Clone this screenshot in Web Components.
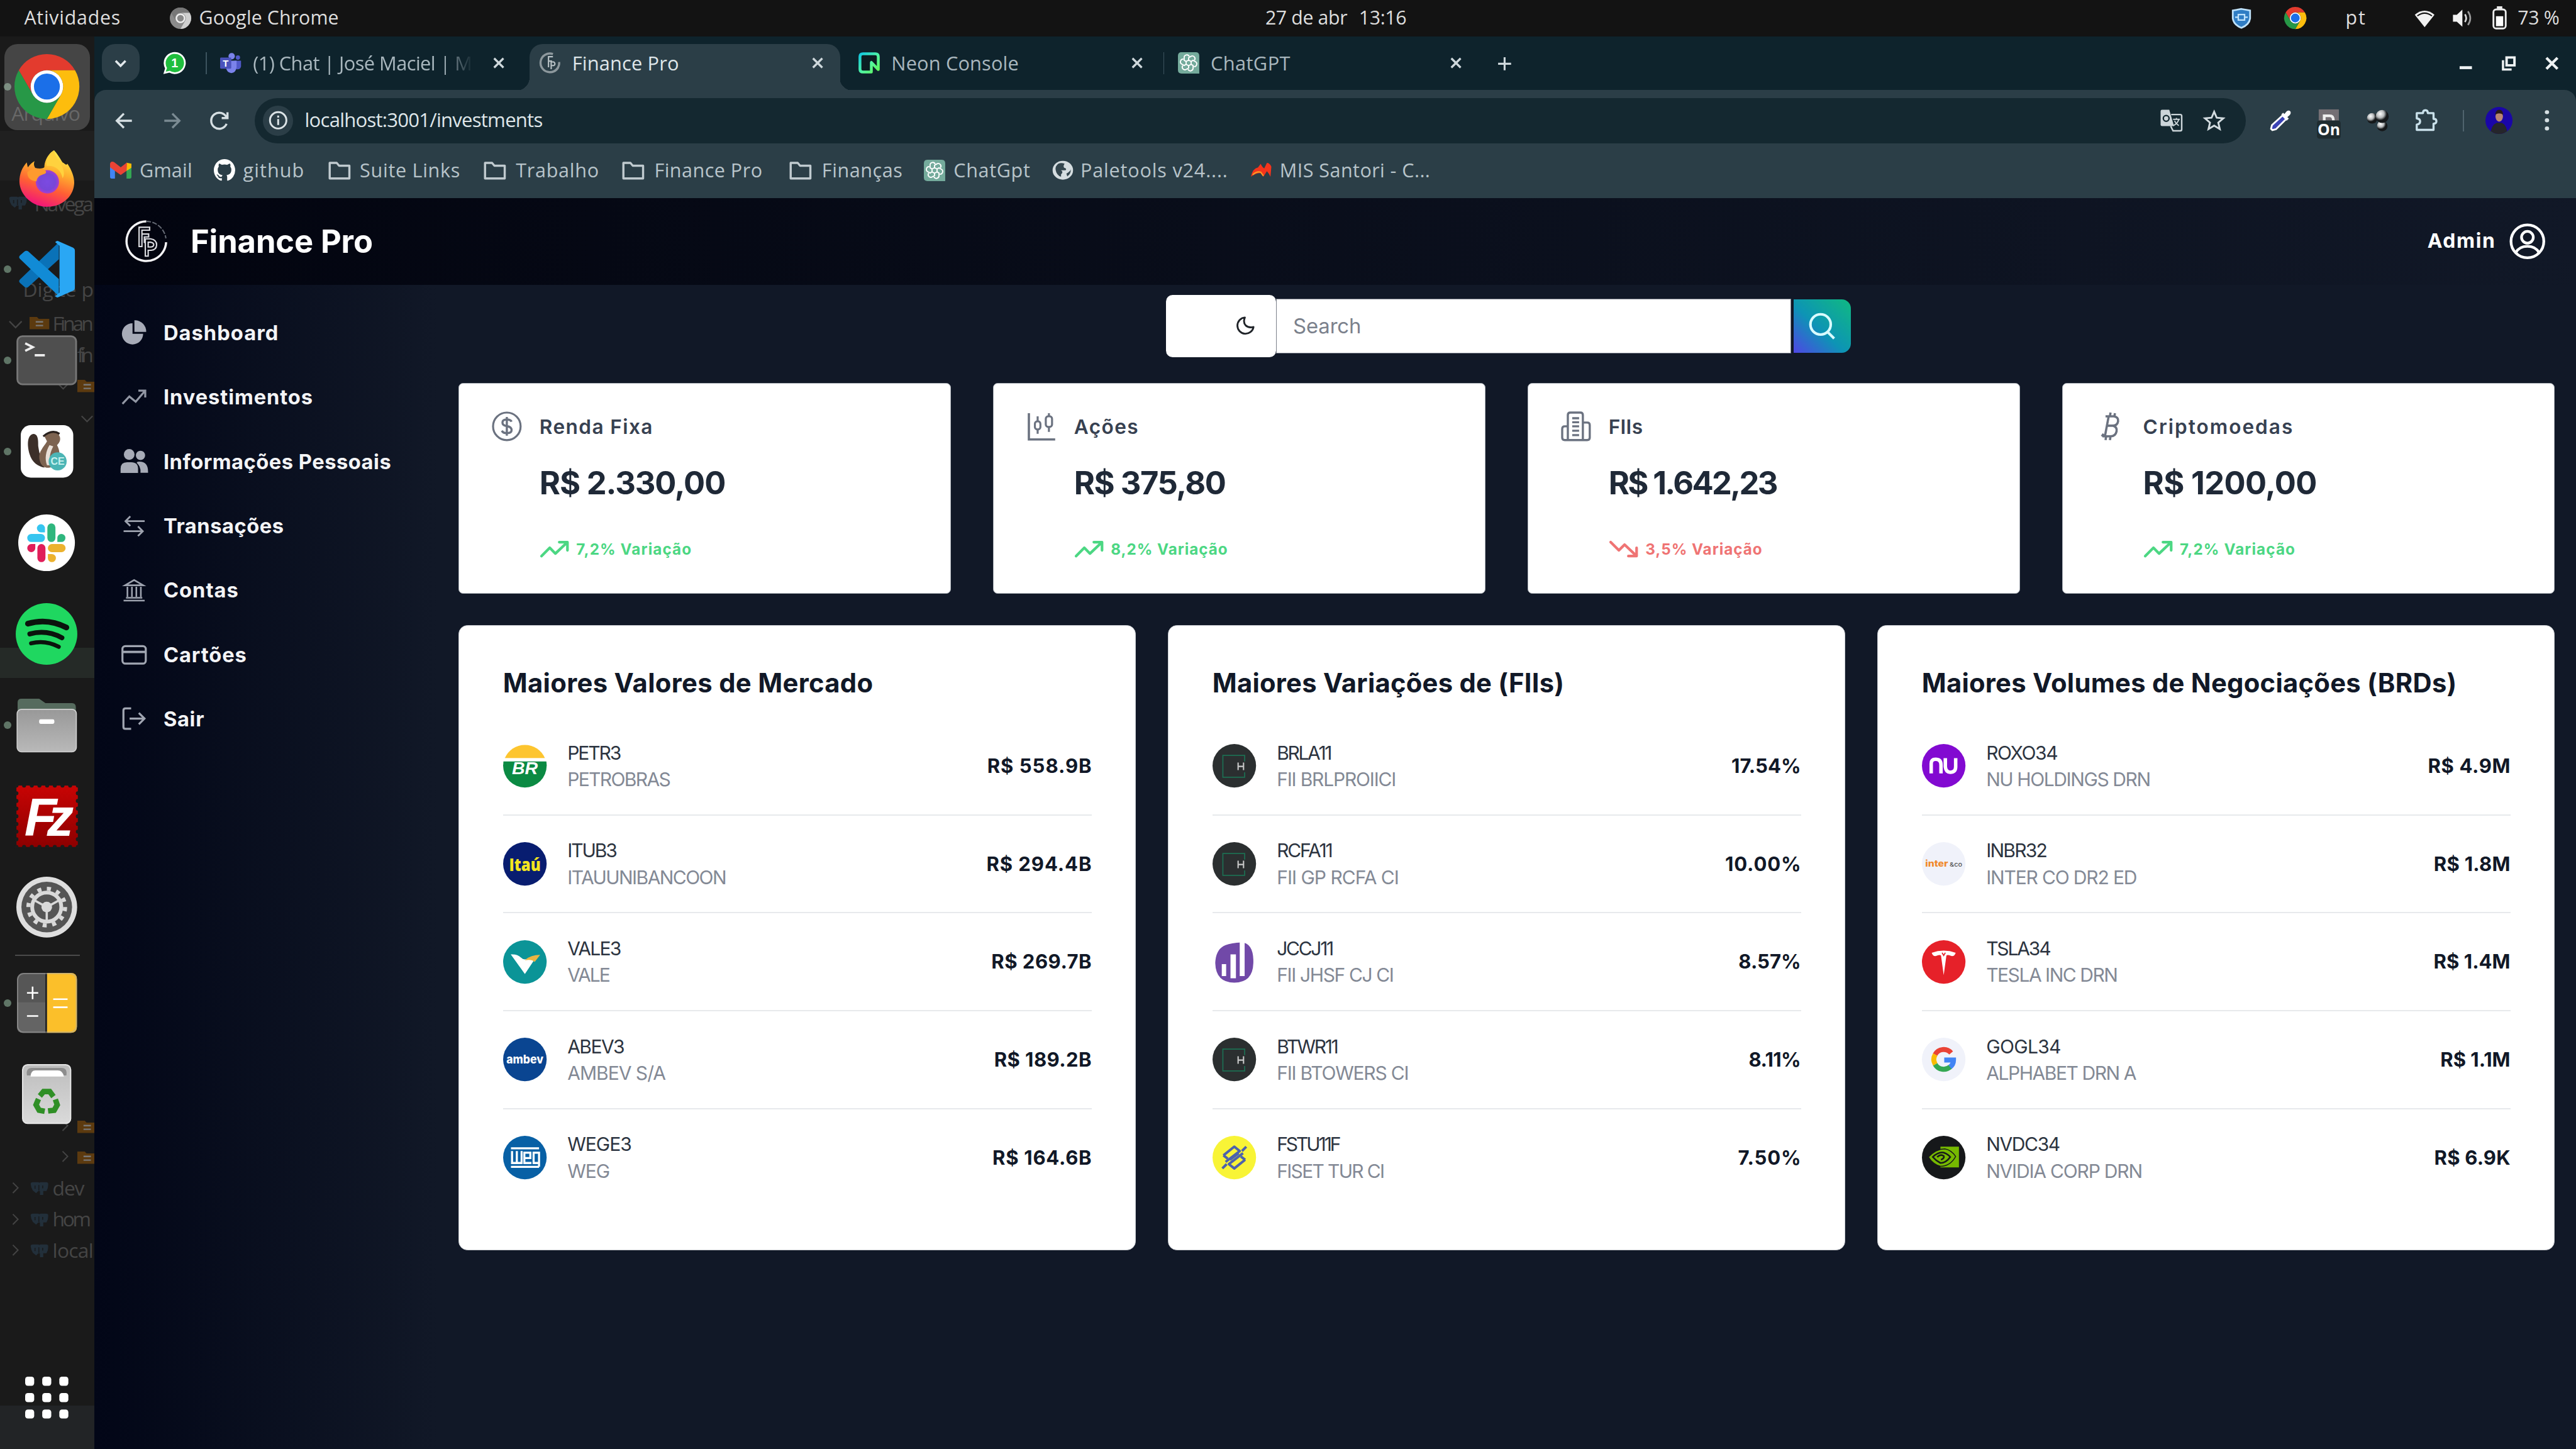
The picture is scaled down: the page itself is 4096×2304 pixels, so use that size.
<!DOCTYPE html>
<html lang="pt-BR">
<head>
<meta charset="utf-8">
<title>Finance Pro</title>
<style>
html{font-size:calc(100vw / 1568);background:#111827}
body{margin:0;width:100vw;height:100vh;overflow:hidden;font-family:"Open Sans","Noto Sans",sans-serif}
</style>
</head>
<body>
<desktop-shell></desktop-shell>
<script>
const UI = '"Open Sans","Noto Sans",sans-serif';
const APP = 'Inter,"Liberation Sans",sans-serif';

const chromeParts = `<path fill="#e33b2e" d="M24 12H44.8A24 24 0 0 0 3.2 12L13.6 30A12 12 0 0 1 24 12Z"/><path fill="#fdbd0d" d="M34.4 30L24 48A24 24 0 0 0 44.8 12H24A12 12 0 0 1 34.4 30Z"/><path fill="#279847" d="M13.6 30L3.2 12A24 24 0 0 0 24 48L34.4 30A12 12 0 0 1 13.6 30Z"/><circle cx="24" cy="24" r="12" fill="#fff"/><circle cx="24" cy="24" r="9.6" fill="#1b6fe8"/>`;
const gptKnot = `<g fill="none" stroke="#fff" stroke-width="1.3" stroke-linejoin="round">${[0,60,120,180,240,300].map(a=>`<path transform="rotate(${a} 12 12)" d="M12 9.2V6.2L14.6 4.7A3 3 0 0 1 18.6 9"/>`).join('')}<path d="M12 8.8L14.8 10.4V13.6L12 15.2L9.2 13.6V10.4Z"/></g>`;
const cart = `<circle cx="20" cy="20" r="20" fill="#2b2f30"/><path d="M29.5 16V10.5H9.5V30.5H29.5V26" fill="none" stroke="#1d6f52" stroke-width="1"/><path d="M23.5 17V24M28.5 17V24M23.5 20.6H28.5" fill="none" stroke="#c9c9c9" stroke-width="1.2"/>`;
const up = c => `<path d="M1.5 12.5L8 6L12.5 10.5L21.5 2M15.5 1.5H22V8" fill="none" stroke="${c}" stroke-width="2.1" stroke-linecap="round" stroke-linejoin="round"/>`;

/* name -> [viewBox, markup] */
const ICONS = {
  chrome:['0 0 48 48', chromeParts],
  chromeGray:['0 0 48 48', `<circle cx="24" cy="24" r="24" fill="#8b8b8b"/><path d="M24 12H44.8A24 24 0 0 0 3.2 12L13.6 30A12 12 0 0 1 24 12Z" fill="#777"/><path d="M34.4 30L24 48A24 24 0 0 0 44.8 12H24A12 12 0 0 1 34.4 30Z" fill="#cfcfcf"/><circle cx="24" cy="24" r="11" fill="#eee"/><circle cx="24" cy="24" r="7.5" fill="#888"/>`],
  firefox:['0 0 48 48', `<defs><linearGradient id="f1" x1=".7" y1="0" x2=".35" y2="1"><stop offset="0" stop-color="#fff34f"/><stop offset=".35" stop-color="#ffb02e"/><stop offset=".65" stop-color="#ff5f34"/><stop offset="1" stop-color="#f1117d"/></linearGradient><radialGradient id="f2"><stop offset="0" stop-color="#7b4ae2"/><stop offset=".7" stop-color="#7747d8"/><stop offset="1" stop-color="#a93dce"/></radialGradient></defs><path fill="url(#f1)" d="M30 1C33 4 35 8 37 11C39 12 40 14 41 12C45 18 47 24 46.500 29C45.500 40 36 47.500 24.500 47.500C12 47.500 2 38 1.500 27C1.500 20 4 15 7.500 11C8 13 8 14 8.500 15C10 13 12 11 14 10C13 12 13.500 14 14.500 15.500C17 16 20 16.500 22 15C22 9 26 3 30 1Z"/><circle cx="24.500" cy="27" r="9.600" fill="url(#f2)"/><path fill="#ff9a2e" d="M8 19C12 15 18 16 22 17C23.500 18 24 19.500 22.500 20.300C19 21.500 16.500 22 15.500 26.500C9 26 8 22 8 19Z"/><path fill="#ffd23e" d="M24 14C30 13 36 17 37 24C39 21 38 17 36.500 14C34 10 31 6 30 1C24.500 5 23 9 24 14Z"/>`],
  vscode:['0 0 48 48', `<path fill="#0a72b8" d="M34 2V16L9 38.500Q7.500 39.500 6 38.300L2.500 35.200Q1 33.700 2.500 32.300Z"/><path fill="#118bd6" d="M34 46V32L9 9.500Q7.500 8.500 6 9.700L2.500 12.800Q1 14.300 2.500 15.700Z"/><path fill="#2aa7f4" d="M33 1L45.500 6.500Q47 7.300 47 9V39Q47 40.700 45.500 41.500L33 47Q32 47 31 46L34.500 43V5L31 2Q32 1 33 1Z"/>`],
  terminal:['0 0 48 40', `<rect x=".8" y=".8" width="46.400" height="38.400" rx="4" fill="#4f4f4f" stroke="#777" stroke-width="1.400"/><path d="M7 6.500L13 9.500L7 12.500M14.500 16H22.500" fill="none" stroke="#eee" stroke-width="1.800"/>`],
  dbeaver:['0 0 44 44', `<rect x="1" y="1" width="42" height="42" rx="8" fill="#fff"/><path fill="#3c2f29" d="M11 8C6 9 6 17 8 24C10 31 15 34 20 35C17 29 16 24 15 18C15 13 15 8 11 8Z"/><path fill="#7d6350" d="M20 10C22 7 28 6 31 8C34 12 32 15 30 17C34 24 32 34 24 35C18 36 15 30 16 24C18 19 21 16 22 14Z"/><path fill="#e9e0d8" d="M24 17C21 22 20 28 22 33L25 33C23 27 25 22 27 18Z"/><path d="M19 10Q26 4 32 8" fill="none" stroke="#2a211d" stroke-width="1.600"/><circle cx="30.500" cy="30" r="7.200" fill="#4bb5b5"/><text x="30.500" y="32.800" font-family="Liberation Sans" font-size="8" font-weight="700" text-anchor="middle" fill="#c9f1ef">CE</text>`],
  slack:['0 0 44 44', `<circle cx="22" cy="22" r="22" fill="#fff"/><g transform="translate(7 7) scale(1.25)"><g fill="#36c5f0"><rect y="6.500" width="11" height="5" rx="2.500"/><path d="M11 5.500H8.500A2.500 2.500 0 1 1 11 3Z"/></g><g fill="#2eb67d"><rect x="12.500" y="0" width="5" height="11.500" rx="2.500"/><path d="M18.700 11.500V9A2.500 2.500 0 1 1 21.200 11.500Z"/></g><g fill="#ecb22e"><rect x="12.800" y="12.800" width="11" height="5" rx="2.500"/><path d="M12.800 19H15.300A2.500 2.500 0 1 1 12.800 21.500Z"/></g><g fill="#e01e5a"><rect x="6.300" y="12.800" width="5" height="11.200" rx="2.500"/><path d="M5 12.800V15.300A2.500 2.500 0 1 1 2.500 12.800Z"/></g></g>`],
  spotify:['0 0 48 48', `<circle cx="24" cy="24" r="24" fill="#1fd760"/><g fill="none" stroke="#0b130d" stroke-linecap="round"><path d="M9.500 16Q25 11.500 39.500 19" stroke-width="4.400"/><path d="M11 24Q24 20.500 36 27" stroke-width="3.800"/><path d="M12 31.300Q23 28.500 33.500 34" stroke-width="3.200"/></g>`],
  files:['0 0 48 44', `<defs><linearGradient id="g" x1="0" y1="0" x2="0" y2="1"><stop offset="0" stop-color="#989898"/><stop offset="1" stop-color="#b9b9b9"/></linearGradient></defs><path d="M1 12V4Q1 1 4 1H18L23 4.500H44Q47 4.500 47 8V14H1Z" fill="#566b5e"/><rect x=".6" y="9.500" width="46.800" height="34" rx="3.500" fill="url(#g)" stroke="#d0d0d0" stroke-width=".8"/><rect x="18" y="17.500" width="12" height="3.600" rx="1.200" fill="#fff"/>`],
  filezilla:['0 0 48 48', `<defs><linearGradient id="z" x1="0" y1="0" x2="0" y2="1"><stop offset="0" stop-color="#c80404"/><stop offset="1" stop-color="#8d0000"/></linearGradient></defs><rect x="1" y="1" width="46" height="46" fill="url(#z)"/><rect x="1" y="1" width="46" height="46" fill="none" stroke="#1b1b1b" stroke-width="3" stroke-linecap="round" stroke-dasharray="0 5.750"/><text x="7" y="38.500" font-family="Liberation Sans" font-size="40" font-weight="700" font-style="italic" letter-spacing="-7.500" fill="#fff">Fz</text>`],
  settings:['0 0 48 48', `<circle cx="24" cy="24" r="24" fill="#dedede"/><circle cx="24" cy="24" r="20" fill="#555"/><circle cx="24" cy="24" r="14.500" fill="none" stroke="#d9d9d9" stroke-width="3.200" stroke-dasharray="3.200 4.392"/><circle cx="24" cy="24" r="11.500" fill="none" stroke="#d9d9d9" stroke-width="3"/><circle cx="24" cy="24" r="4.200" fill="#d9d9d9"/><path d="M24 24L24 35M24 24L14 18.500M24 24L34 18.500" stroke="#d9d9d9" stroke-width="1.800"/>`],
  calc:['0 0 48 48', `<rect width="48" height="48" rx="5" fill="#565656"/><path d="M24 0H43Q48 0 48 5V43Q48 48 43 48H24Z" fill="#fbbf2a"/><path d="M0 23.500H23V48H5Q0 48 0 43Z" fill="#646464"/><path d="M23.300 0V48" stroke="#222" stroke-width="1.300"/><path d="M8 16H17M12.500 11V21M8 34.500H17M29 21H40.500M29 27.500H40.500" stroke="#fff" stroke-width="1.300"/><rect x=".5" y=".5" width="47" height="47" rx="5" fill="none" stroke="#aaa" stroke-opacity=".5"/>`],
  trash:['0 0 40 48', `<defs><linearGradient id="t" x1="0" y1="0" x2="0" y2="1"><stop offset="0" stop-color="#bdbdbd"/><stop offset="1" stop-color="#dadada"/></linearGradient></defs><rect x=".5" y=".5" width="39" height="47" rx="4" fill="url(#t)" stroke="#e6e6e6"/><path d="M4 9Q3 3 8 3H32Q37 3 36 9Z" fill="#8d8d8d"/><path d="M7 10Q7 5 11 5H29Q33 5 34 10Z" fill="#fff"/><g fill="none" stroke="#2f8f26" stroke-width="4.400"><path d="M14.500 25.500L17.500 22H22.500L25.500 26"/><path transform="rotate(120 20 30.500)" d="M14.500 25.500L17.500 22H22.500L25.500 26"/><path transform="rotate(240 20 30.500)" d="M14.500 25.500L17.500 22H22.500L25.500 26"/></g>`],
  apps:['0 0 26 26', [0,9.8,19.6].map(y=>[0,10.2,20.4].map(x=>`<rect x="${x}" y="${y}" width="5.400" height="5.400" rx="1.600" fill="#fff"/>`).join('')).join('')],
  shield:['0 0 24 26', `<path d="M12 1L23 3V13Q22 21 12 25Q2 21 1 13V3Z" fill="#2f7dc4" stroke="#bfe2fb" stroke-width="2.200"/><path d="M8 8H16V15H8ZM8 11.500H4M16 11.500H20" fill="none" stroke="#bfe2fb" stroke-width="1.800"/>`],
  wifi:['0 0 24 20', `<path d="M12 20L.5 5.500Q12-4 23.500 5.500Z" fill="#f2f2f2"/><path d="M3.500 6.800Q12 .3 20.500 6.800" fill="none" stroke="#131313" stroke-width="1.600"/>`],
  volume:['0 0 24 22', `<path d="M1 7H5.500L12 1V21L5.500 15H1Z" fill="#f2f2f2"/><path d="M15 6.500Q18 11 15 15.500" fill="none" stroke="#ddd" stroke-width="2"/><path d="M18.500 3Q24 11 18.500 19" fill="none" stroke="#999" stroke-width="2"/>`],
  battery:['0 0 16 26', `<rect x="1.200" y="3.500" width="13.600" height="21" rx="3" fill="none" stroke="#ececec" stroke-width="2"/><rect x="5" y="0" width="6" height="3.500" fill="#ececec"/><rect x="4" y="11" width="8" height="11" fill="#fff"/>`],
  chevron:['0 0 12 12', `<path d="M2 4L6 8L10 4" fill="none" stroke="#e3e9ec" stroke-width="1.800"/>`],
  whatsapp:['0 0 24 24', `<path d="M.5 23.500L2.300 17.500A11.500 11.500 0 1 1 6.800 22Z" fill="#fff"/><path d="M3 21L4.300 17A9.600 9.600 0 1 1 7.200 20Z" fill="#1fbe3d"/><text x="12.300" y="16.500" font-family="Liberation Sans" font-weight="700" font-size="13" text-anchor="middle" fill="#fff">1</text>`],
  teams:['0 0 24 24', `<circle cx="13" cy="4.500" r="3.600" fill="#7b83eb"/><circle cx="20" cy="6" r="2.400" fill="#5059c9"/><path d="M16 9.500H23.500V16Q22.500 20 18 19Z" fill="#5059c9"/><path d="M6.500 9.500H18.500V17Q17.500 23.500 12.500 23.500Q7.500 23 6.500 17Z" fill="#7b83eb"/><rect x="0" y="6" width="12.500" height="12.500" rx="1" fill="#4b53bc"/><text x="6.200" y="16" font-family="Liberation Sans" font-weight="700" font-size="10.500" text-anchor="middle" fill="#fff">T</text>`],
  fpfav:['0 0 24 24', `<path d="M15 2A10.500 10.500 0 1 0 22 11M21 17A10 10 0 0 1 9 22" fill="none" stroke="#8d989d" stroke-width="2.400"/><path d="M10 17V5H15M10 10H14M13 19V11H16Q18.500 13 16 15H13" fill="none" stroke="#b9c2c6" stroke-width="1.500"/>`],
  neon:['0 0 24 24', `<defs><linearGradient id="n" x1="0" y1="0" x2="1" y2="1"><stop offset="0" stop-color="#12c8e0"/><stop offset=".55" stop-color="#52f5a1"/><stop offset="1" stop-color="#63f655"/></linearGradient></defs><path d="M14.500 22.300H5Q1.700 22.300 1.700 19V5Q1.700 1.700 5 1.700H19Q22.300 1.700 22.300 5V19.500L14.500 11.500Z" fill="#0c1d22" stroke="url(#n)" stroke-width="3.200" stroke-linejoin="round"/>`],
  gpt:['0 0 24 24', `<path d="M4 0H20Q24 0 24 4V24H4Q0 24 0 20V4Q0 0 4 0Z" fill="#75ab9c"/>${gptKnot}`],
  x:['0 0 12 12', `<path d="M2 2L10 10M10 2L2 10" stroke="#cfd8dc" stroke-width="1.800"/>`],
  plus:['0 0 12 12', `<path d="M6 1V11M1 6H11" stroke="#cfd8dc" stroke-width="1.500"/>`],
  min:['0 0 12 12', `<path d="M1 9.500H11" stroke="#eef2f3" stroke-width="2.400"/>`],
  restore:['0 0 12 12', `<path d="M4.400 1.200H10.800V7.600H4.400Z" fill="none" stroke="#eef2f3" stroke-width="2"/><path d="M1.500 3.500V11H8.500" fill="none" stroke="#eef2f3" stroke-width="1.800"/>`],
  close:['0 0 12 12', `<path d="M1.500 1.500L10.500 10.500M10.500 1.500L1.500 10.500" stroke="#eef2f3" stroke-width="2.200"/>`],
  back:['0 0 24 24', `<path d="M21 12H4M12 4L4 12L12 20" fill="none" stroke="#d6dfe3" stroke-width="2.400"/>`],
  fwd:['0 0 24 24', `<path d="M3 12H20M12 4L20 12L12 20" fill="none" stroke="#7b8b93" stroke-width="2.400"/>`],
  reload:['0 0 24 24', `<path d="M20 15.500A9 9 0 1 1 20 8.500M21 2.500V9H14.500" fill="none" stroke="#d6dfe3" stroke-width="2.400"/>`],
  info:['0 0 24 24', `<circle cx="12" cy="12" r="9.600" fill="none" stroke="#dbe3e6" stroke-width="2.200"/><path d="M12 10.500V17.500M12 6.500V8.800" stroke="#dbe3e6" stroke-width="2.200"/>`],
  translate:['0 0 24 24', `<path d="M1 2.500Q1 1 2.500 1H10L15 18H2.500Q1 18 1 16.500Z" fill="#ccd5d9"/><path d="M12 6H21.500Q23 6 23 7.500V21.500Q23 23 21.500 23H14L11.500 18" fill="none" stroke="#ccd5d9" stroke-width="1.600"/><circle cx="6.800" cy="10" r="3" fill="none" stroke="#142830" stroke-width="1.500"/><path d="M14 11H21M17.500 9.500V11M20 11Q19 15 14.500 17.500M15.500 12.500Q17 15.500 20 17.500" stroke="#ccd5d9" stroke-width="1.200" fill="none"/>`],
  star:['0 0 24 24', `<path d="M12 2.500L14.800 9L21.900 9.600L16.500 14.300L18.100 21.200L12 17.500L5.900 21.200L7.500 14.300L2.100 9.600L9.200 9Z" fill="none" stroke="#d3dce0" stroke-width="2"/>`],
  pipette:['0 0 24 24', `<path d="M14.500 6L18.500 10L7 21.500L3 22.500L1.500 21L2.500 17Z" fill="#3b43b5" stroke="#fff" stroke-width="2"/><path d="M13 5L15 3L16.500 4.500L19 1.500Q22-.5 23.500 2Q24 4.500 22 6L19.800 8L21.500 9.500L19 12Z" fill="#fff"/>`],
  onext:['0 0 26 34', `<rect x="2" y="2" width="22" height="20" fill="#746f74"/><path d="M8 14V9H14Q18 9 18 14" fill="none" stroke="#eee" stroke-width="3"/><rect x="0" y="14" width="26" height="20" rx="3" fill="#1f2c30"/><text x="13" y="30.500" font-family="Open Sans" font-weight="700" font-size="17" text-anchor="middle" fill="#fff">On</text>`],
  balls:['0 0 24 24', `<defs><radialGradient id="b" cx=".35" cy=".3"><stop offset="0" stop-color="#fff"/><stop offset=".6" stop-color="#b5b8ba"/><stop offset="1" stop-color="#15181a"/></radialGradient></defs><circle cx="17" cy="18" r="5.500" fill="url(#b)"/><circle cx="6.500" cy="10" r="5.500" fill="url(#b)"/><circle cx="17" cy="8" r="6.800" fill="url(#b)"/>`],
  puzzle:['0 0 24 24', `<path d="M2.500 4.500H9Q9 1.500 11.500 1.500Q14 1.500 14 4.500H20V10.500Q23 10.500 23 13Q23 15.500 20 15.500V22H2.500V16.500Q6 16 6 13.200Q6 10.500 2.500 10Z" fill="none" stroke="#c9e0ea" stroke-width="2.200" stroke-linejoin="round"/>`],
  avatar:['0 0 24 24', `<defs><clipPath id="a"><circle cx="12" cy="12" r="12"/></clipPath></defs><g clip-path="url(#a)"><rect width="24" height="24" fill="#1a06a8"/><path d="M4.500 24Q5 16 10 14H14.500Q19 16 19.500 24Z" fill="#25252b"/><ellipse cx="12.200" cy="8.500" rx="3.300" ry="4.600" fill="#b98573"/><path d="M8.700 7Q9 2.500 12.200 2.500Q15.500 2.500 15.700 7Q12 4.500 8.700 7Z" fill="#2a1a18"/></g>`],
  dots:['0 0 6 24', `<g fill="#d6dfe3"><circle cx="3" cy="3.500" r="2.100"/><circle cx="3" cy="12" r="2.100"/><circle cx="3" cy="20.500" r="2.100"/></g>`],
  gmail:['0 0 24 20', `<path d="M0 3V18Q0 19.500 1.500 19.500H5.500V7Z" fill="#4285f4"/><path d="M24 3V18Q24 19.500 22.500 19.500H18.500V7Z" fill="#34a853"/><path d="M18.500 2L24 3V7.500L18.500 11Z" fill="#fbbc04"/><path d="M0 3Q1-.5 5 1.500L12 7L19 1.500L18.500 11L12 15.500L5.500 11L0 7Z" fill="#ea4335"/>`],
  github:['0 0 16 16', `<path fill="#fff" fill-rule="evenodd" d="M8 0C3.580 0 0 3.580 0 8c0 3.540 2.290 6.530 5.470 7.590.4.070.550-.170.550-.380 0-.190-.010-.820-.010-1.490-2.010.370-2.530-.490-2.690-.940-.090-.230-.480-.940-.820-1.130-.280-.150-.680-.520-.010-.530.630-.010 1.080.580 1.230.820.720 1.210 1.870.870 2.330.660.070-.520.280-.870.510-1.070-1.780-.2-3.640-.890-3.640-3.950 0-.870.310-1.590.820-2.150-.080-.2-.360-1.020.080-2.120 0 0 .670-.210 2.200.820.640-.180 1.320-.270 2-.270s1.360.090 2 .270c1.530-1.040 2.200-.820 2.200-.820.440 1.100.160 1.920.080 2.120.510.560.820 1.270.820 2.150 0 3.070-1.870 3.750-3.650 3.950.290.250.540.730.540 1.480 0 1.070-.010 1.930-.010 2.200 0 .210.150.460.550.380A8.010 8.010 0 0 0 16 8c0-4.420-3.580-8-8-8z"/>`],
  folder:['0 0 24 20', `<path d="M1.500 2H9L11.500 5H22.500V18.500H1.500Z" fill="none" stroke="#c0cacf" stroke-width="2.300" stroke-linejoin="round"/>`],
  globe:['0 0 24 24', `<circle cx="12" cy="12" r="11.500" fill="#d5dde0"/><path d="M4 12Q3 7 7 4Q10 2.500 14 4Q12 7 13.500 9Q17 10 15 12H10Q13 14 10 17V20Q5 18 4 12ZM16 16Q20 14 21 11Q21 17 17 19.500Z" fill="#34464e"/>`],
  mis:['0 0 24 16', `<path d="M0 15Q2 6 8 5L11 1Q13 5 15 6L18 0Q21 0 23 4L22 15Q20 11 18 9L14 15Q12 12 11 11Q5 11 0 15Z" fill="#f4341c"/><path d="M2 13Q6 9 11 10L14 14" stroke="#fb9a24" stroke-width="1.400" fill="none"/>`],
  fplogo:['0 0 44 44', `<path d="M22 1.300A20.700 20.700 0 0 0 9 38A20.700 20.700 0 0 0 42.700 23" fill="none" stroke="#f4f4f6" stroke-width="2.300"/><path d="M22 1.300A20.700 20.700 0 0 1 42.500 19" fill="none" stroke="#666b75" stroke-width="1.300" stroke-dasharray="5 1.500"/><path d="M14.500 27.500V7.500H25.500V10.500H17.500V27.500ZM17.500 14.500H24.500V17.500H20V24M21 37.500V19.500H26.500Q33 20.500 32.800 26Q32.500 31 27 31.500H24V37.500ZM24 28V23H26.500Q29.800 23.500 29.800 25.800Q29.500 28 26.500 28Z" fill="none" stroke="#dcdde1" stroke-width="1.400"/>`],
  user:['0 0 24 24', `<g fill="none" stroke="#fff" stroke-width="1.800"><circle cx="12" cy="12" r="10.900"/><circle cx="12" cy="9.300" r="3.900"/><path d="M4.300 19.500Q6.500 15.300 12 15.300Q17.500 15.300 19.700 19.500"/></g>`],
  pie:['0 0 24 24', `<path fill="#a7abb7" d="M10.500 3.500V13.500H20.500A10 10 0 1 1 10.500 3.500Z"/><path fill="#a7abb7" d="M12.300 .8A10.500 10.500 0 0 1 23.400 11.700H12.300Z"/>`],
  trend:['0 0 24 24', `<path d="M1 18.500L7.500 11.500L13.500 16.500L22 6.500M16 6H22.500V12.500" fill="none" stroke="#9297a4" stroke-width="1.900"/>`],
  users:['0 0 24 22', `<g fill="#a7abb7"><circle cx="17.500" cy="6" r="4"/><path d="M15 11.500Q24 10.500 24 20V21H17.500Q18 15 14 12.500Z"/></g><g fill="#a7abb7" stroke="#070c1b" stroke-width=".8"><circle cx="7.800" cy="5.200" r="5"/><path d="M0 21.500V17.500Q0 11.500 6 11.500H9.500Q15.800 11.500 15.800 17.500V21.500Z"/></g>`],
  swap:['0 0 24 24', `<path d="M23 7H3M8 2L3 7L8 12M1 17.500H21M16 12.500L21 17.500L16 22.500" fill="none" stroke="#9da2ae" stroke-width="1.900"/>`],
  bank:['0 0 24 24', `<path d="M1 23H23M3.500 20H20.500M5 8.500V19M9.700 8.500V19M14.300 8.500V19M19 8.500V19M2.500 7H21.500L12 1.500Z" fill="none" stroke="#9da2ae" stroke-width="1.700"/>`],
  card:['0 0 24 20', `<rect x="1" y="2" width="22" height="16.500" rx="2.800" fill="none" stroke="#a0a5b1" stroke-width="1.900"/><path d="M1 7.500H23" stroke="#a0a5b1" stroke-width="2.200"/>`],
  exit:['0 0 24 24', `<path d="M9.500 2H4Q2 2 2 4V20Q2 22 4 22H9.500M8 12H22M17 6.500L22.500 12L17 17.500" fill="none" stroke="#a0a5b1" stroke-width="2"/>`],
  moon:['0 0 24 24', `<path d="M11.500 1.500A10.300 10.300 0 1 0 22.500 13.500Q16 15 12.500 11.500Q9 7.500 11.500 1.500Z" fill="none" stroke="#1f2328" stroke-width="2.300" stroke-linejoin="round"/>`],
  lens:['0 0 24 24', `<circle cx="10.500" cy="10.500" r="9" fill="none" stroke="#d9fbff" stroke-width="2.300"/><path d="M16.500 17L22.500 23" stroke="#d9fbff" stroke-width="2.300"/>`],
  dollar:['0 0 24 24', `<circle cx="12" cy="12" r="11" fill="none" stroke="#6b7280" stroke-width="1.600"/><path d="M15.800 8.300Q15 6.500 12 6.500Q8.500 6.500 8.500 9Q8.500 11.200 12 11.800Q15.800 12.500 15.800 15Q15.800 17.500 12 17.500Q9 17.500 8 15.500M12 4.500V19.500" fill="none" stroke="#6b7280" stroke-width="1.700"/>`],
  candles:['0 0 24 24', `<path d="M2 1.500V22.500H23" fill="none" stroke="#6b7280" stroke-width="1.800"/><path d="M9 4V8M9 14.500V18M18 1.500V4M18 12.500V16.500" stroke="#6b7280" stroke-width="1.600"/><rect x="6.800" y="8" width="4.400" height="6.500" rx="2" fill="none" stroke="#6b7280" stroke-width="1.600"/><rect x="15.500" y="4" width="5" height="8.500" rx="2" fill="none" stroke="#6b7280" stroke-width="1.600"/>`],
  building:['0 0 24 24', `<path d="M5.500 23V3Q5.500 1 7.500 1H15.500Q17.500 1 17.500 3V23M5.500 12H3Q1 12 1 14V21Q1 23 3 23H21Q23 23 23 21V11Q23 9 21 9H17.500M9 5.500H14.500M9 8.700H14.500M9 12H14.500M9 15.500H14.500M9 19H14.500" fill="none" stroke="#6b7280" stroke-width="1.700"/>`],
  bitcoin:['0 0 24 24', `<path d="M9 4H14.500Q18.500 4.500 18 8Q17.500 11.500 13.500 11.500H9.500M8.500 11.500H14Q17.500 12.500 16.800 16Q16 20 12 20H5.500M10.500 4L7.500 20M8 4H11M12 1L11.500 4M15.500 1.500L15 4.500M8.500 20L8 23M12 20L11.500 23M5 20L6.500 18" fill="none" stroke="#6b7280" stroke-width="1.800"/>`],
  upg:['0 0 24 14', up('#4cd783')],
  downr:['0 0 24 14', `<path d="M1.500 1.500L8 8L12.500 3.500L21.500 12M15.500 12.500H22V6" fill="none" stroke="#ef7474" stroke-width="2.100" stroke-linecap="round" stroke-linejoin="round"/>`],
  petro:['0 0 40 40', `<circle cx="20" cy="20" r="20" fill="#0b8a43"/><path d="M0 19A20 20 0 0 1 40 19Z" fill="#fff"/><path d="M1.500 13.200A20 20 0 0 1 38.500 13.200Z" fill="#fdc52f"/><rect x="0" y="13" width="40" height="3" fill="#fff"/><path d="M.4 16H39.600Q40 17 40 20H0Z" fill="#0b8a43"/><text x="20" y="27.500" font-family="Liberation Sans" font-size="16.500" font-weight="700" font-style="italic" text-anchor="middle" fill="#fff">BR</text>`],
  itau:['0 0 40 40', `<circle cx="20" cy="20" r="20" fill="#081d70"/><text x="20" y="26.500" font-family="Open Sans" font-size="16" font-weight="800" textLength="29" lengthAdjust="spacingAndGlyphs" text-anchor="middle" fill="#f3e51f">Itaú</text>`],
  vale:['0 0 40 40', `<circle cx="20" cy="20" r="20" fill="#0b9497"/><path d="M7 13Q13 12.500 16.500 16Q19 18.500 22 17L30 16L20 31Z" fill="#fff"/><path d="M20 18.500Q25 13.500 34 13.500L29 20Q26 17 20 18.500Z" fill="#eab543"/>`],
  ambev:['0 0 40 40', `<circle cx="20" cy="20" r="20" fill="#0a4591"/><text x="20" y="23.500" font-family="Inter" font-size="11" font-weight="800" textLength="34" lengthAdjust="spacingAndGlyphs" text-anchor="middle" fill="#fff">ambev</text>`],
  weg:['0 0 40 40', `<circle cx="20" cy="20" r="20" fill="#0860a5"/><path d="M7.200 11.500H33M7.200 28.500H33M8.200 14V25H17V14M12.600 14V25M26 25H19.500V15.500H25V20.500H19.500M33 28.500V15.500H28V25H33" fill="none" stroke="#fff" stroke-width="1.900"/>`],
  cart:['0 0 40 40', cart],
  jhsf:['0 0 40 40', `<path d="M2.500 21Q3 8 12 4.500Q17 2.500 27 2Q38 3 37.500 21Q37 39 20 39Q3 39 2.500 21Z" fill="#7149a8"/><path d="M8.500 22H12.500V33H8.500ZM16.500 13H21.500V35H16.500ZM25 0H29.500V33H25Z" fill="#fff"/>`],
  bb:['0 0 40 40', `<circle cx="20" cy="20" r="20" fill="#f8f436"/><g fill="none" stroke="#4c62ac" stroke-width="2.300" stroke-linejoin="round"><path d="M10 18L20 10L25 14L12 24M30 22L20 30L15 26L28 16"/><path d="M9 30L13 26M31 10L27 14M16 22L24 16M10 18L14 21M30 22L26 19"/></g>`],
  nu:['0 0 40 40', `<circle cx="20" cy="20" r="20" fill="#820ad1"/><path d="M8.500 27V18Q8.500 14 12.500 14Q17.500 14 17.500 19V27M21.500 13V21Q22 26 26 26Q31 26 31 21V13" fill="none" stroke="#fff" stroke-width="3.200"/>`],
  inter:['0 0 40 40', `<circle cx="20" cy="20" r="20" fill="#f0f2fa"/><text x="3" y="22.500" font-family="Inter" font-size="8.500" font-weight="800" textLength="21" lengthAdjust="spacingAndGlyphs" fill="#f08a2c">inter</text><text x="25.500" y="22.500" font-family="Inter" font-size="5.500" font-weight="500" textLength="11.500" lengthAdjust="spacingAndGlyphs" fill="#555">&amp;co</text>`],
  tesla:['0 0 40 40', `<circle cx="20" cy="20" r="20" fill="#e62129"/><path d="M9 11.500Q20 7.500 31 11.500Q30 15 27 14.500Q24 13 22.500 14L20 32L17.500 14Q16 13 13 14.500Q10 15 9 11.500Z" fill="#fff"/><path d="M18.500 11.500L20 14L21.500 11.500" fill="none" stroke="#e62129" stroke-width="1"/>`],
  google:['0 0 40 40', `<circle cx="20" cy="20" r="20" fill="#f0f2fa"/><g fill="none" stroke-width="4.600"><path d="M12.100 15.500A9 9 0 0 1 26.800 14" stroke="#ea4335"/><path d="M12.200 24.500A9 9 0 0 1 12.200 15.500" stroke="#fbbc05"/><path d="M26 26.700A9 9 0 0 1 12.200 24.500" stroke="#34a853"/><path d="M20.500 20.500H29Q29 24.500 25.800 27" stroke="#4285f4"/></g>`],
  nvidia:['0 0 40 40', `<circle cx="20" cy="20" r="20" fill="#16181a"/><path d="M17 10H34V29H17Z" fill="#76b900"/><path d="M6 19.500Q13 12 21 12Q27 13 31 19Q26 28 17 28Q10 26 6 19.500Z" fill="#76b900" stroke="#16181a" stroke-width=".8"/><path d="M10 19.500Q15 14.500 20 15.500Q24 17 26 19.500Q22 25 17 25Q13 23 10 19.500ZM14 19.500Q17 16.500 20 18.500Q21 20.500 17.500 22" fill="none" stroke="#16181a" stroke-width="1.500"/>`],
  gfolder:['0 0 16 11', `<path d="M0 1H6L7.500 2.500H16V11H0Z" fill="#5c3a0f"/><path d="M5 5H11M5 8H11" stroke="#777" stroke-width="1.200"/>`],
  gdb:['0 0 18 12', `<path d="M1 2Q1 .5 3 .5H8Q9 1.200 10 .5H15Q17.500 .5 17 3Q17 6 15.500 8.500H12.500V12H9.500V8.500H8L6 10.500L3 8Q1.200 5 1 2Z" fill="#222f3a"/><path d="M5 3.500V6.500M8.500 3V8M12 3.500V6" stroke="#1a1d20" stroke-width="1"/>`],
  gdown:['0 0 12 8', `<path d="M1 1.500L6 6.500L11 1.500" fill="none" stroke="#444" stroke-width="1.200"/>`],
  gright:['0 0 8 12', `<path d="M1.500 1L6.500 6L1.500 11" fill="none" stroke="#444" stroke-width="1.200"/>`],
};

const fitters = [];
const make = (tag, render) => customElements.define(tag, class extends HTMLElement {
  constructor(){ super(); this.attachShadow({mode:'open'}); }
  connectedCallback(){ if(!this.shadowRoot.firstChild) this.shadowRoot.innerHTML = render(this); }
});
const at = (el,n,d='') => el.getAttribute(n) ?? d;

/* Inline icon; s = width in rem, h = optional height */
make('ui-icon', el => {
  const [vb, body] = ICONS[at(el,'n')];
  const [,,w,h] = vb.split(' ').map(Number);
  const s = +at(el,'s',12), hh = +at(el,'h', s*h/w);
  return `<style>:host{display:block;flex:none;width:${s}rem;height:${hh}rem}svg{display:block;width:100%;height:100%;overflow:visible}</style><svg viewBox="${vb}" preserveAspectRatio="none" aria-hidden="true">${body}</svg>`;
});

/* One-line label tracked out or in to a set measure (w, in rem) */
customElements.define('fit-text', class extends HTMLElement {
  constructor(){
    super();
    this.attachShadow({mode:'open'}).innerHTML = `<style>:host{display:block;flex:none;white-space:pre;line-height:1.25}span{display:inline-block}</style><span><slot></slot></span>`;
  }
  connectedCallback(){ fitters.push(this); }
  fit(rem){
    const w = parseFloat(this.getAttribute('w')); if(!w) return;
    const s = this.shadowRoot.querySelector('span');
    const n = this.textContent.length;
    const ls = (w*rem - s.getBoundingClientRect().width)/(n-1);
    this.style.width = w+'rem';
    s.style.letterSpacing = ls.toFixed(3)+'px';
  }
});

make('top-bar', () => `<style>
:host{display:flex;align-items:center;height:22.300rem;background:#131313;color:#dedede;font-size:11.600rem;font-weight:500}
.l,.r{display:flex;align-items:center}.l{padding-left:14.700rem;width:755.500rem}.c{display:flex;gap:7rem}.r{flex:1;justify-content:flex-end;padding-right:10rem}
fit-text{margin-bottom:.600rem}
</style>
<div class="l"><fit-text w="58.500">Atividades</fit-text><ui-icon n="chromeGray" s="13" style="margin:0 5rem 0 30rem"></ui-icon><fit-text w="85">Google Chrome</fit-text></div>
<div class="c"><fit-text w="50">27 de abr</fit-text><fit-text w="29">13:16</fit-text></div>
<div class="r"><ui-icon n="shield" s="11.500"></ui-icon><ui-icon n="chrome" s="13.500" style="margin-left:20rem"></ui-icon><fit-text w="12" style="margin-left:24rem">pt</fit-text><ui-icon n="wifi" s="12.500" style="margin-left:30rem"></ui-icon><ui-icon n="volume" s="12.500" style="margin-left:10.500rem"></ui-icon><ui-icon n="battery" s="8.800" style="margin-left:12rem"></ui-icon><fit-text w="25.500" style="margin-left:6.500rem">73 %</fit-text></div>`);

make('dock-item', el => `<style>
:host{display:grid;grid-template-columns:9rem 39rem 9rem;height:55.500rem;flex:none;align-items:center;justify-items:center;position:relative}
i{width:4.600rem;height:4.600rem;border-radius:50%;background:#5f7566;${el.hasAttribute('run')?'':'visibility:hidden'}}
.a{position:absolute;left:2.700rem;top:1.700rem;width:52rem;height:52.300rem;border-radius:8rem;background:#fff;opacity:.19}
ui-icon{position:relative}
</style>${el.hasAttribute('active')?'<div class="a"></div>':''}<i></i><ui-icon n="${at(el,'n')}" s="${at(el,'s')}" h="${at(el,'h')}"></ui-icon>`);

make('side-dock', () => `<style>
:host{display:flex;flex-direction:column;position:relative;width:57.500rem;background:#1a1a1a;padding-top:2.800rem;box-sizing:border-box;overflow:hidden}
.ghost{position:absolute;inset:0;color:#454545;font-size:12.200rem}
.ghost>*{position:absolute}
.b1{left:0;right:0;top:57.500rem;height:30rem;background:#202020}.b2{left:0;right:0;top:372rem;height:18.500rem;background:#252a27}.b3{left:0;right:0;bottom:0;height:26.500rem;background:#222426}
hr{border:0;margin:1rem 9rem 1.100rem;height:.700rem;background:#4a4a4a;position:relative;align-self:stretch;flex:none}
ui-icon.g{margin:auto auto 17.500rem;position:relative}
</style>
<div class="ghost"><div class="b1"></div><div class="b2"></div><div class="b3"></div>
<fit-text w="42" style="left:7rem;top:39rem">Arquivo</fit-text>
<ui-icon n="gdb" s="12" style="left:5rem;top:97rem"></ui-icon>
<fit-text w="36" style="left:21rem;top:94rem">Navega</fit-text>
<fit-text w="43" style="left:14rem;top:146rem">Digite p</fit-text>
<ui-icon n="gdown" s="9" style="left:5rem;top:172rem"></ui-icon><ui-icon n="gfolder" s="12" style="left:18rem;top:170rem"></ui-icon>
<fit-text w="25" style="left:32rem;top:167rem">Finan</fit-text>
<fit-text w="10" style="left:47rem;top:186rem">fin</fit-text>
<ui-icon n="gfolder" s="12" style="left:47rem;top:208rem"></ui-icon><ui-icon n="gdown" s="8" style="left:34.500rem;top:210rem"></ui-icon><ui-icon n="gdown" s="8" style="left:49rem;top:230rem"></ui-icon>
<ui-icon n="gright" s="5" style="left:37rem;top:659rem"></ui-icon><ui-icon n="gfolder" s="12" style="left:47rem;top:659rem"></ui-icon>
<ui-icon n="gright" s="5" style="left:37rem;top:678rem"></ui-icon><ui-icon n="gfolder" s="12" style="left:47rem;top:678rem"></ui-icon>
${[['dev',693,19.5],['hom',712,23.5],['local',731,25]].map(([t,y,w])=>`<ui-icon n="gright" s="5" style="left:7rem;top:${y+4}rem"></ui-icon><ui-icon n="gdb" s="12" style="left:18rem;top:${y+4}rem"></ui-icon><fit-text w="${w}" style="left:32rem;top:${y}rem">${t}</fit-text>`).join('')}
</div>
<dock-item n="chrome" s="39.500" h="39.500" active run></dock-item>
<dock-item n="firefox" s="35.500" h="35.500"></dock-item>
<dock-item n="vscode" s="36" h="36" run></dock-item>
<dock-item n="terminal" s="37" h="30.500" run></dock-item>
<dock-item n="dbeaver" s="33.500" h="33.500" run></dock-item>
<dock-item n="slack" s="34.500" h="34.500"></dock-item>
<dock-item n="spotify" s="37.500" h="37.500"></dock-item>
<dock-item n="files" s="37" h="33.500" run></dock-item>
<dock-item n="filezilla" s="39" h="39"></dock-item>
<dock-item n="settings" s="37" h="37"></dock-item>
<hr>
<dock-item n="calc" s="36.500" h="36.500" run></dock-item>
<dock-item n="trash" s="30" h="36.500"></dock-item>
<ui-icon class="g" n="apps" s="26.500" h="26.500"></ui-icon>`);

make('browser-tab', el => `<style>
:host{display:flex;align-items:center;width:194.300rem;flex:none;height:28.200rem;box-sizing:border-box;padding:0 0 4.800rem 6rem;position:relative;font-size:11.800rem;color:#a9b7be}
:host([active]){color:#dfe6e9}
.bg{position:absolute;left:0;top:0;bottom:0;width:189rem;background:#2b3e47;border-radius:8rem 8rem 0 0}
.bg::before,.bg::after{content:"";position:absolute;bottom:0;width:8rem;height:8rem}
.bg::before{left:-8rem;background:radial-gradient(circle at 0 0,transparent 8rem,#2b3e47 8.100rem)}
.bg::after{right:-8rem;background:radial-gradient(circle at 100% 0,transparent 8rem,#2b3e47 8.100rem)}
.sep{position:absolute;left:-2.800rem;top:5rem;width:.700rem;height:13.500rem;background:#3c535e}
.t{flex:1;min-width:0;overflow:hidden;margin-left:7rem;position:relative}
:host([fade]) .t{-webkit-mask:linear-gradient(90deg,#000 115rem,transparent 134rem)}
ui-icon{position:relative}.x{margin-right:14.500rem;margin-left:8rem}
</style>${el.hasAttribute('active')?'<div class="bg"></div>':''}${el.hasAttribute('sep')?'<div class="sep"></div>':''}
<ui-icon n="${at(el,'n')}" s="13" h="13"></ui-icon><div class="t"><fit-text w="${at(el,'w')}">${at(el,'label')}</fit-text></div><ui-icon class="x" n="x" s="8.500"></ui-icon>`);

make('tab-strip', () => `<style>
:host{display:flex;align-items:flex-end;height:32.600rem;background:#0e232c}
.chev{width:23rem;height:23rem;margin:0 0 5rem 4.500rem;border-radius:8rem;background:#2b3e47;display:grid;place-items:center}
.wa{margin:0 15rem 9.500rem 14rem}.sp{flex:1}
.w{margin-bottom:12rem}
</style><div class="chev"><ui-icon n="chevron" s="9"></ui-icon></div><ui-icon class="wa" n="whatsapp" s="14"></ui-icon>
<browser-tab n="teams" label="(1) Chat | José Maciel | M" w="133.500" sep fade></browser-tab>
<browser-tab n="fpfav" label="Finance Pro" w="65" active></browser-tab>
<browser-tab n="neon" label="Neon Console" w="77.500"></browser-tab>
<browser-tab n="gpt" label="ChatGPT" w="48.500" sep></browser-tab>
<ui-icon n="plus" s="9.500" style="margin:0 0 11.500rem 6rem"></ui-icon><div class="sp"></div>
<ui-icon class="w" n="min" s="9" style="margin-right:17rem"></ui-icon><ui-icon class="w" n="restore" s="9" style="margin-right:17.500rem"></ui-icon><ui-icon class="w" n="close" s="9" style="margin-right:10rem"></ui-icon>`);

make('nav-bar', () => `<style>
:host{display:flex;align-items:center;padding:4.800rem 0 0 11.500rem;height:27.400rem;color:#dfe6e9;font-size:11.900rem}
.pill{margin-left:14.800rem;width:1212rem;height:27.400rem;box-sizing:border-box;border-radius:14rem;background:#142830;display:flex;align-items:center;padding:0 12.500rem 0 5rem}
.i{width:18.500rem;height:18.500rem;border-radius:50%;background:#2b3e47;display:grid;place-items:center;margin-right:7rem}
.sp{flex:1}.v{width:.700rem;height:13rem;background:#50646e;margin-left:15.500rem}
</style><ui-icon n="back" s="13"></ui-icon><ui-icon n="fwd" s="13" style="margin-left:16.500rem"></ui-icon><ui-icon n="reload" s="13" style="margin-left:15.700rem"></ui-icon>
<div class="pill"><div class="i"><ui-icon n="info" s="12.500"></ui-icon></div><fit-text w="145" style="margin-bottom:1.200rem">localhost:3001/investments</fit-text><div class="sp"></div><ui-icon n="translate" s="14"></ui-icon><ui-icon n="star" s="13.500" style="margin-left:12.500rem"></ui-icon></div>
<ui-icon n="pipette" s="13" style="margin-left:14.500rem"></ui-icon><ui-icon n="onext" s="14.500" style="margin-left:15.800rem;margin-top:3rem"></ui-icon><ui-icon n="balls" s="14" style="margin-left:15.500rem"></ui-icon><ui-icon n="puzzle" s="14" style="margin-left:15.500rem"></ui-icon><div class="v"></div><ui-icon n="avatar" s="16.500" style="margin-left:12.800rem"></ui-icon><ui-icon n="dots" s="3.700" h="14" style="margin-left:19.200rem"></ui-icon>`);

const marks = [['gmail','Gmail',67,85,32,11],['github','github',130,148,37,13.5],['folder','Suite Links',200,219,61,11.5],['folder','Trabalho',294.5,314,50.5,11.5],['folder','Finance Pro',378.5,398.3,65.7,11.5],['folder','Finanças',480.5,500.3,49,11.5],['gpt','ChatGpt',562.5,580.5,46.5,13],['globe','Paletools v24....',640.5,657.7,89.5,12],['mis','MIS Santori - C...',761.5,779,91.5,9]];
make('bookmarks-bar', () => `<style>
:host{display:flex;align-items:center;padding-left:9.500rem;height:33.200rem;color:#b8c4ca;font-size:11.700rem}
div{display:flex;align-items:center;flex:none}fit-text{margin-bottom:.700rem}
</style>${marks.map((m,i)=>`<div style="width:${(marks[i+1]?.[2]??900)-m[2]}rem"><ui-icon n="${m[0]}" s="${m[0]==='folder'?13.7:13}" h="${m[5]}" style="margin-right:${m[3]-m[2]-(m[0]==='folder'?13.7:13)}rem"></ui-icon><fit-text w="${m[4]}">${m[1]}</fit-text></div>`).join('')}`);

make('app-header', () => `<style>
:host{display:flex;align-items:center;height:52.700rem;padding:0 18.500rem .600rem 18.500rem;box-sizing:border-box;background:linear-gradient(90deg,#02040f,#111827);color:#fff}
b{font-weight:700;font-size:19.400rem;margin:.500rem 0 0 14.300rem;flex:1}.u{font-weight:700;font-size:12.200rem;margin-right:9rem}
</style><ui-icon n="fplogo" s="25.700"></ui-icon><b><fit-text w="111">Finance Pro</fit-text></b><fit-text class="u" w="41">Admin</fit-text><ui-icon n="user" s="22"></ui-icon>`);

make('nav-link', el => `<style>
:host{display:grid;grid-template-columns:26.500rem 1fr;align-items:center;height:39.200rem;font-size:12.500rem;font-weight:700;color:#f3f4f6}
div{width:17rem;display:grid;place-items:center}fit-text{margin-top:.500rem}
</style><div><ui-icon n="${at(el,'n')}" s="${at(el,'s',15.5)}"></ui-icon></div><fit-text w="${at(el,'w')}">${at(el,'label')}</fit-text>`);

make('app-sidebar', () => `<style>
:host{display:block;width:208rem;flex:none;padding:9.400rem 0 0 15.500rem;box-sizing:border-box;background:linear-gradient(90deg,#020617,#111827)}
</style>
<nav-link n="pie" label="Dashboard" w="69.800"></nav-link>
<nav-link n="trend" label="Investimentos" w="90.800"></nav-link>
<nav-link n="users" s="17" label="Informações Pessoais" w="138.500"></nav-link>
<nav-link n="swap" s="14" label="Transações" w="73.200"></nav-link>
<nav-link n="bank" s="14" label="Contas" w="45.500"></nav-link>
<nav-link n="card" s="15.500" label="Cartões" w="50.500"></nav-link>
<nav-link n="exit" s="15" label="Sair" w="24.700"></nav-link>`);

make('search-box', () => `<style>
:host{display:flex;align-items:center;justify-content:center;height:38.200rem;width:417rem;margin-left:430.400rem}
.t{width:67.100rem;height:38.200rem;background:#fff;border-radius:4rem;box-sizing:border-box;padding-right:12.800rem;display:flex;align-items:center;justify-content:flex-end}
.in{flex:1;height:33.600rem;box-sizing:border-box;background:#fff;border:.700rem solid #7b808a;display:flex;align-items:center;padding-left:10rem;color:#7b818c;font-size:12.600rem}
.b{margin-left:1.500rem;width:34.900rem;height:32.700rem;border-radius:0 5.600rem 5.600rem 0;background:linear-gradient(to top right,#4f46e5,#0d94b5 45%,#10b981);display:grid;place-items:center}
</style><div class="t"><ui-icon n="moon" s="11.500"></ui-icon></div><div class="in"><fit-text w="41.500">Search</fit-text></div><div class="b"><ui-icon n="lens" s="16.500"></ui-icon></div>`);

make('stat-card', el => `<style>
:host{display:grid;grid-template-columns:29rem 1fr;grid-template-rows:20.500rem 1fr auto;height:128rem;box-sizing:border-box;background:#fff;border:.500rem solid #aeb3ba;border-radius:2.800rem;padding:15.500rem 19rem 20.700rem 19.800rem;align-items:center;color:#374151}
.t{font-size:12.100rem;font-weight:600;margin-top:.500rem}.v{grid-column:2;font-size:19.400rem;font-weight:700;color:#1f2937;align-self:start;margin-top:12rem}
.d{grid-column:2;display:flex;align-items:center;gap:3.900rem;font-size:9.300rem;font-weight:700;color:${el.hasAttribute('down')?'#ef7474':'#4cd783'}}
</style><ui-icon n="${at(el,'n')}" s="18.300"></ui-icon><fit-text class="t" w="${at(el,'tw')}">${at(el,'label')}</fit-text>
<fit-text class="v" w="${at(el,'vw')}">${at(el,'value')}</fit-text>
<div class="d"><ui-icon n="${el.hasAttribute('down')?'downr':'upg'}" s="18.500"></ui-icon><fit-text w="${at(el,'dw')}">${at(el,'delta')}</fit-text></div>`);

make('asset-row', el => `<style>
:host{display:flex;align-items:center;height:59.600rem;box-sizing:border-box;border-bottom:.800rem solid #e7e9ec}
:host([last]){border-color:transparent}
.n{flex:1;margin:.600rem 0 0 12.700rem;font-size:11.500rem;display:grid;gap:1.800rem;color:#2c3440}
.s{color:#838995}.v{font-size:11.900rem;font-weight:700;color:#111827;margin-top:.400rem}
</style><ui-icon n="${at(el,'n')}" s="26.500"></ui-icon><div class="n"><fit-text w="${at(el,'aw')}">${at(el,'a')}</fit-text><fit-text class="s" w="${at(el,'bw')}">${at(el,'b')}</fit-text></div><fit-text class="v" w="${at(el,'cw')}">${at(el,'c')}</fit-text>`);

make('asset-list', el => `<style>
:host{display:block;height:380.700rem;box-sizing:border-box;background:#fff;border:.400rem solid #c9ccd1;border-radius:5.500rem;padding:24.900rem 26.600rem 0}
h2{margin:0;height:31.100rem;font-size:16rem;font-weight:650;color:#111827}
</style><h2><fit-text w="${at(el,'w')}">${at(el,'label')}</fit-text></h2><slot></slot>`);

const rows = r => r.map((x,i)=>`<asset-row n="${x[0]}" a="${x[1]}" aw="${x[2]}" b="${x[3]}" bw="${x[4]}" c="${x[5]}" cw="${x[6]}"${i===4?' last':''}></asset-row>`).join('');
make('invest-page', () => `<style>
:host{flex:1;display:block;padding:6rem 13rem 0 13.700rem;background:#111827}
.c{display:grid;grid-template-columns:repeat(4,299.700rem);justify-content:space-between;margin:15.700rem 0 19.100rem}
.l{display:grid;grid-template-columns:repeat(3,412.200rem);justify-content:space-between}
</style><search-box></search-box>
<div class="c">
<stat-card n="dollar" label="Renda Fixa" tw="68.800" value="R$ 2.330,00" vw="113.500" delta="7,2% Variação" dw="70"></stat-card>
<stat-card n="candles" label="Ações" tw="39" value="R$ 375,80" vw="92.700" delta="8,2% Variação" dw="71"></stat-card>
<stat-card n="building" label="FIIs" tw="20.800" value="R$ 1.642,23" vw="103.300" delta="3,5% Variação" dw="71"></stat-card>
<stat-card n="bitcoin" label="Criptomoedas" tw="91" value="R$ 1200,00" vw="106" delta="7,2% Variação" dw="70"></stat-card>
</div><div class="l">
<asset-list label="Maiores Valores de Mercado" w="225.200">${rows([['petro','PETR3',33,'PETROBRAS',63,'R$ 558.9B',63.5],['itau','ITUB3',30.5,'ITAUUNIBANCOON',97,'R$ 294.4B',64],['vale','VALE3',33,'VALE',26.3,'R$ 269.7B',61],['ambev','ABEV3',35,'AMBEV S/A',60,'R$ 189.2B',59.3],['weg','WEGE3',39.3,'WEG',26,'R$ 164.6B',60.3]])}</asset-list>
<asset-list label="Maiores Variações de (FIIs)" w="213.800">${rows([['cart','BRLA11',33.8,'FII BRLPROIICI',72.8,'17.54%',42.3],['cart','RCFA11',34.3,'FII GP RCFA CI',74.5,'10.00%',46.2],['jhsf','JCCJ11',34.9,'FII JHSF CJ CI',71.5,'8.57%',38],['cart','BTWR11',37.7,'FII BTOWERS CI',80.5,'8.11%',31.8],['bb','FSTU11F',39.2,'FISET TUR CI',65.8,'7.50%',38.3]])}</asset-list>
<asset-list label="Maiores Volumes de Negociações (BRDs)" w="325.300">${rows([['nu','ROXO34',43.8,'NU HOLDINGS DRN',100.3,'R$ 4.9M',50.2],['inter','INBR32',37.4,'INTER CO DR2 ED',92,'R$ 1.8M',46.6],['tesla','TSLA34',39.6,'TESLA INC DRN',80.3,'R$ 1.4M',46.7],['google','GOGL34',45.7,'ALPHABET DRN A',91.6,'R$ 1.1M',42.6],['nvidia','NVDC34',45.2,'NVIDIA CORP DRN',95.3,'R$ 6.9K',46.3]])}</asset-list>
</div>`.replace('dw="71"></stat-card>\n<stat-card n="bitcoin"','dw="71" down></stat-card>\n<stat-card n="bitcoin"'));

make('desktop-shell', () => `<style>
:host{display:flex;flex-direction:column;width:1568rem;height:100vh;font-family:${UI}}
.row{flex:1;display:flex;min-height:0}.win{flex:1;display:flex;flex-direction:column;background:#0e232c;min-width:0}
.tools{background:#2b3e47;border-radius:7rem 7rem 0 0;height:65.800rem}
.app{flex:1;display:flex;flex-direction:column;font-family:${APP};min-height:0}.body{flex:1;display:flex;min-height:0}
</style><top-bar></top-bar><div class="row"><side-dock></side-dock><div class="win"><tab-strip></tab-strip>
<div class="tools"><nav-bar></nav-bar><bookmarks-bar></bookmarks-bar></div>
<div class="app"><app-header></app-header><div class="body"><app-sidebar></app-sidebar><invest-page></invest-page></div></div></div></div>`);

const rem = parseFloat(getComputedStyle(document.documentElement).fontSize);
fitters.forEach(f => f.fit(rem));
</script>
</body>
</html>
